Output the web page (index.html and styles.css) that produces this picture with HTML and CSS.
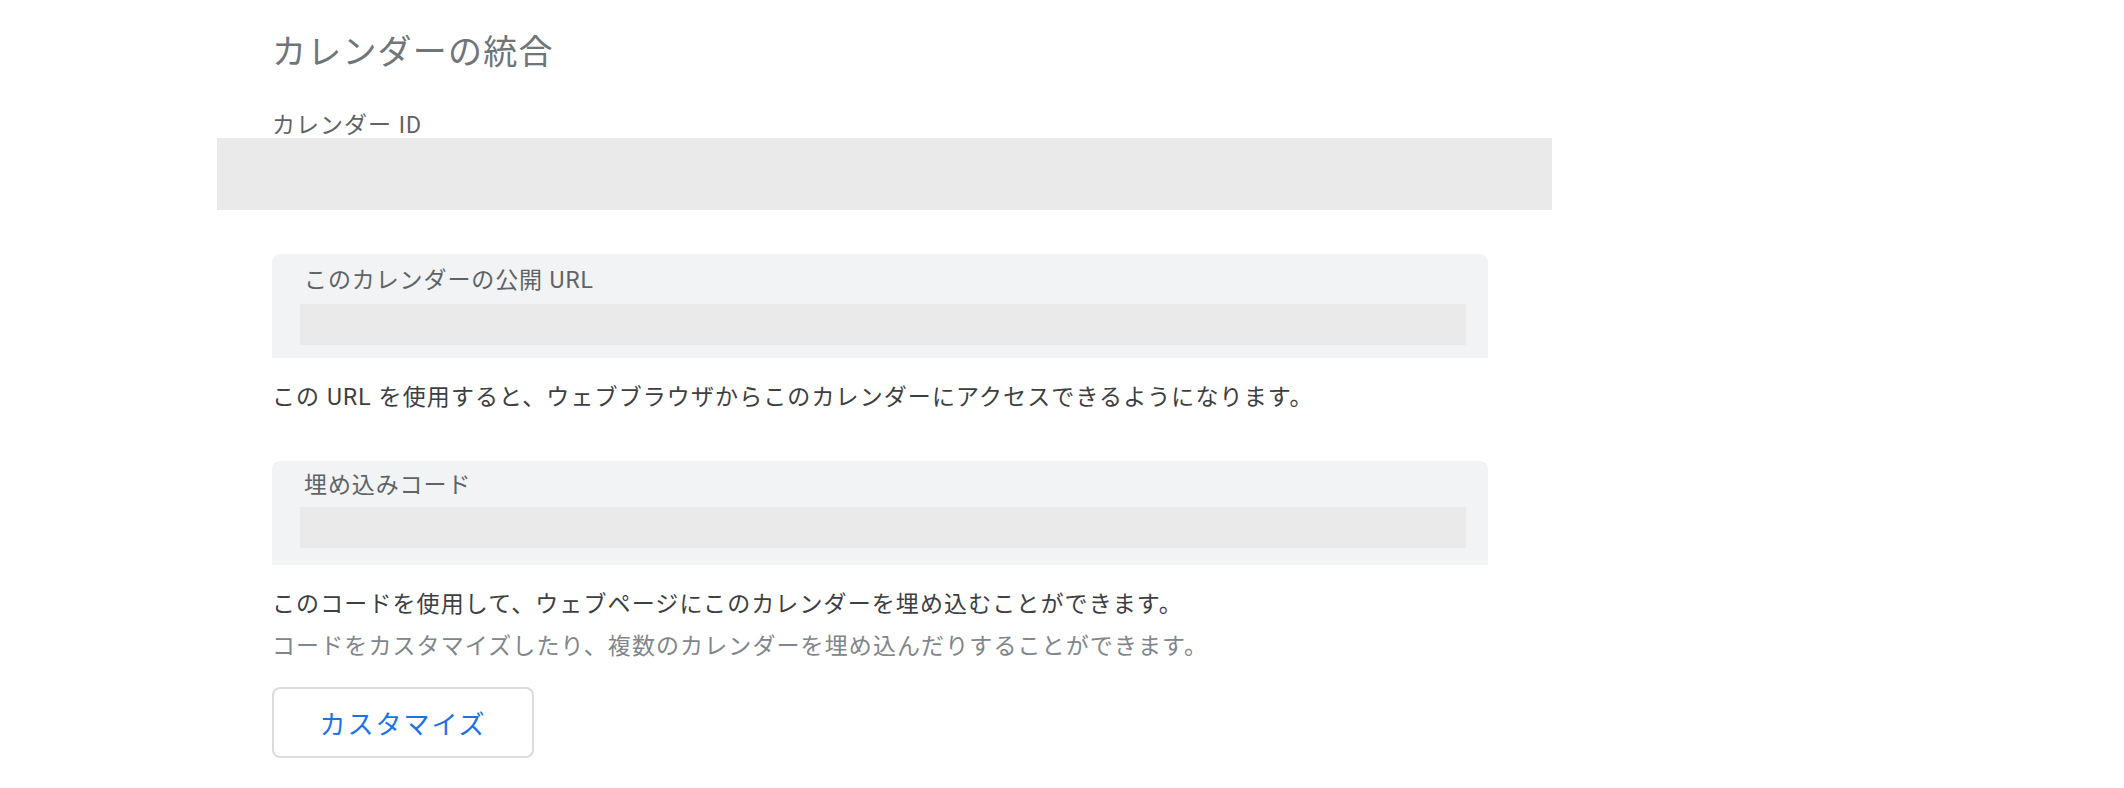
FILE: index.html
```html
<!DOCTYPE html>
<html lang="ja">
<head>
  <meta charset="UTF-8" />
  <meta name="viewport" content="width=device-width, initial-scale=1.0" />
  <title>カレンダーの統合</title>
  <link rel="stylesheet" href="styles.css">
</head>
<body>
  <div class="page">
    <h2 class="title">カレンダーの統合</h2>

    <div class="field-label">カレンダー ID</div>
    <div class="id-field"></div>

    <div class="card">
      <div class="card-label">このカレンダーの公開 URL</div>
      <div class="card-input"></div>
    </div>
    <p class="note">この URL を使用すると、ウェブブラウザからこのカレンダーにアクセスできるようになります。</p>

    <div class="card card-embed">
      <div class="card-label">埋め込みコード</div>
      <div class="card-input"></div>
    </div>
    <p class="note">このコードを使用して、ウェブページにこのカレンダーを埋め込むことができます。</p>
    <p class="note note-sub">コードをカスタマイズしたり、複数のカレンダーを埋め込んだりすることができます。</p>

    <button class="customize-btn">カスタマイズ</button>
  </div>
</body>
</html>
```

FILE: styles.css
```css
body {
  margin: 0;
  background: #fff;
  font-family: Roboto, "Noto Sans CJK JP", sans-serif;
}
.page {
  padding: 32px 0 0 272px;
}
.title {
  margin: 0;
  font-size: 34px;
  line-height: 40px;
  font-weight: 400;
  letter-spacing: 1.2px;
  color: #70757a;
}
.field-label {
  margin-top: 42px;
  font-size: 23px;
  line-height: 24px;
  letter-spacing: 1px;
  color: #5f6368;
}
.id-field {
  margin-left: -55px;
  width: 1335px;
  height: 72px;
  background: #eaeaea;
}
.card {
  margin-top: 44px;
  width: 1216px;
  box-sizing: border-box;
  padding: 12px 22px 13px 28px;
  background: #f1f3f4;
  border-radius: 8px 8px 0 0;
}
.card-embed {
  margin-top: 48px;
  padding-top: 10px;
  padding-bottom: 17px;
}
.card-label {
  padding-left: 4px;
  font-size: 23px;
  line-height: 30px;
  letter-spacing: 0.9px;
  color: #5f6368;
}
.card-input {
  margin-top: 8px;
  height: 41px;
  background: #eaeaea;
}
.card-embed .card-input {
  margin-top: 6px;
}
.note {
  margin: 25px 0 0 0;
  font-size: 23px;
  line-height: 30px;
  letter-spacing: 1.1px;
  color: #3c4043;
}
.note-sub {
  margin-top: 12px;
  color: #80868b;
}
.customize-btn {
  margin-top: 25px;
  width: 262px;
  height: 71px;
  background: #fff;
  border: 2px solid #dadce0;
  border-radius: 8px;
  font-family: Roboto, "Noto Sans CJK JP", sans-serif;
  font-size: 26px;
  letter-spacing: 2px;
  color: #1a73e8;
  cursor: pointer;
}
```
